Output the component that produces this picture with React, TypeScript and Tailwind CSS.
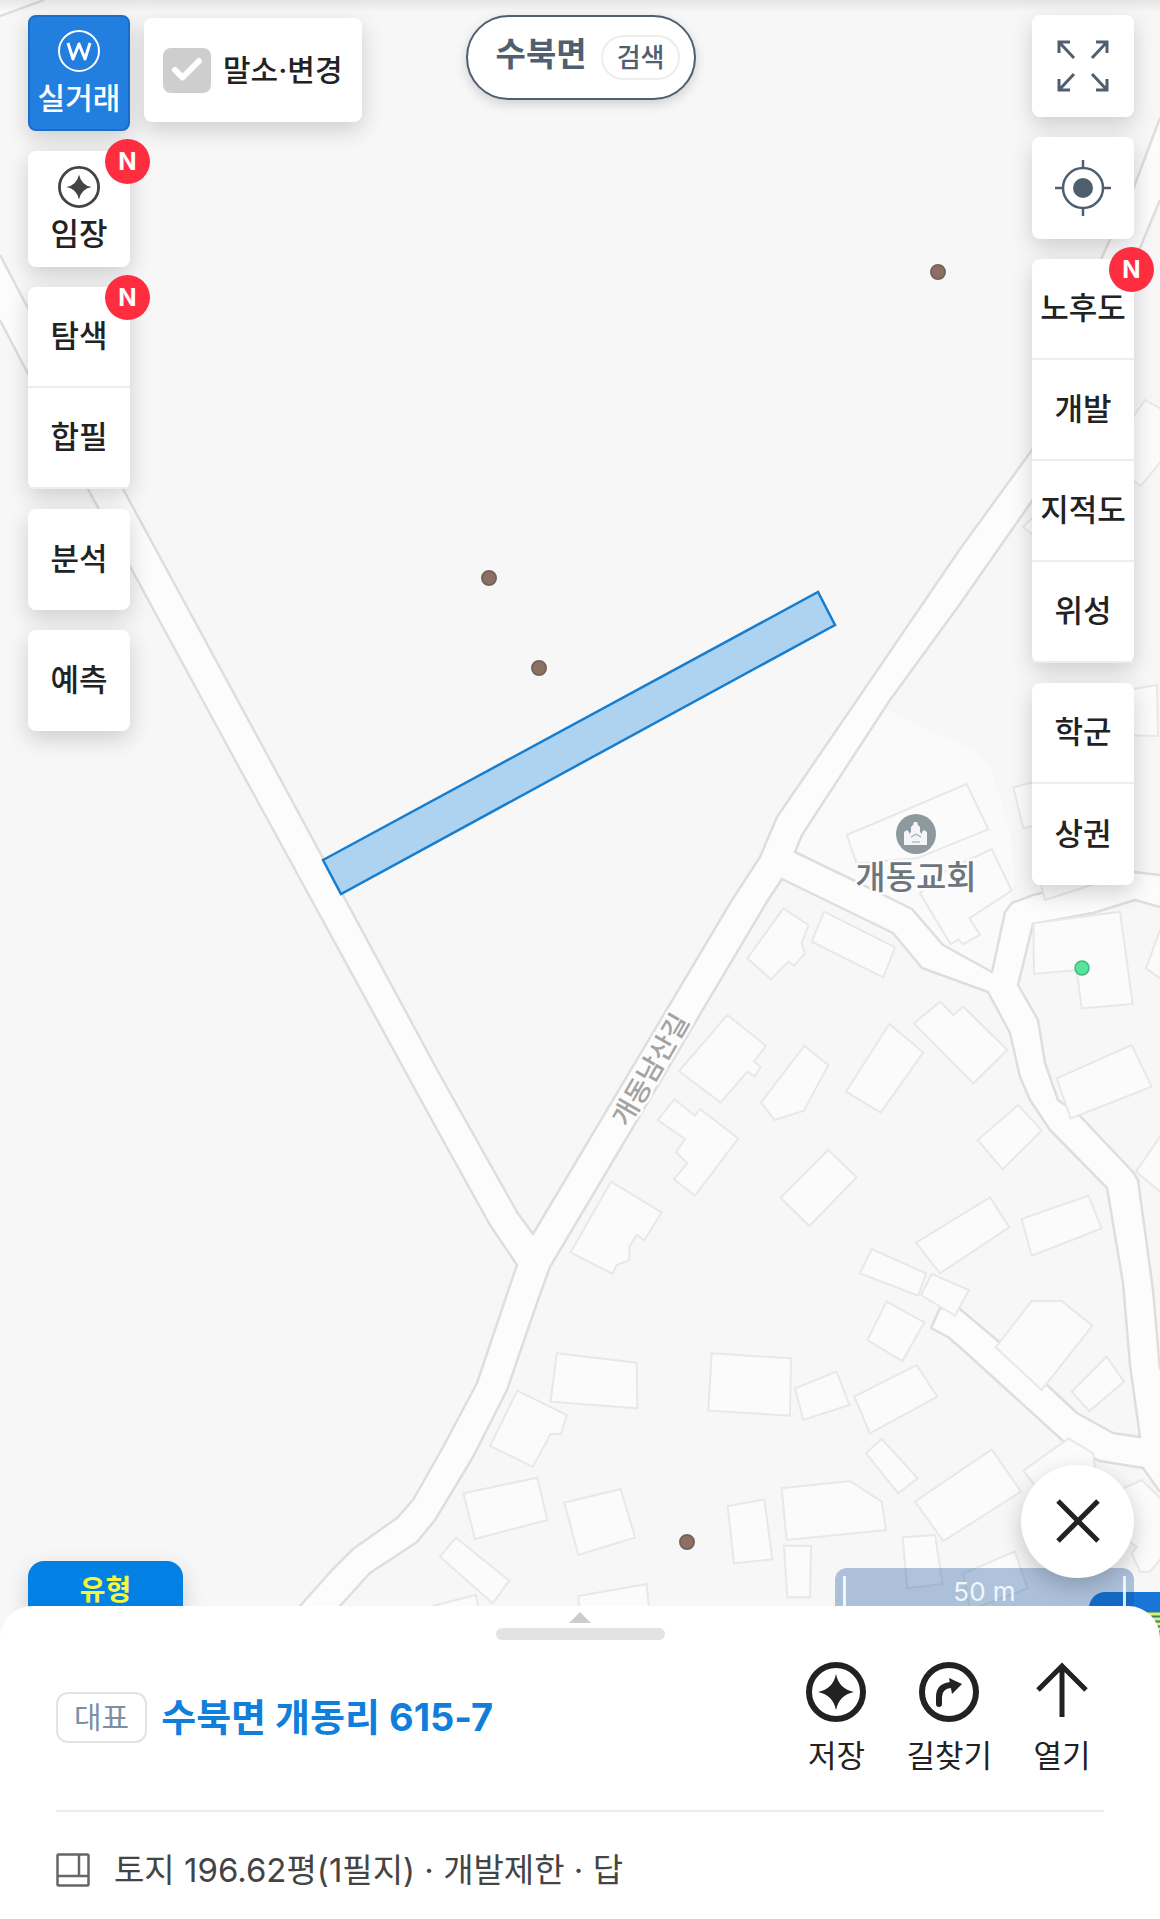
import type { ReactNode } from 'react'
import { Check } from 'lucide-react'

const roadFills = [
  '0,255 123,489 270,760 440,1075 517,1212 533,1234 550,1267 517,1265 490,1225 440,1135 235,760 88,489 0,320',
  '533,1234 732,900 760,857 777,817 857,700 960,549 1032,450 1102,257 1134,187 1160,118 1160,200 1140,248 1090,400 1032,501 960,604 890,700 802,835 795,852 782,879 768,900 550,1267 538,1300 507,1390 473,1457 435,1520 417,1542 370,1573 340,1606 310,1640 270,1640 300,1606 332,1570 353,1549 397,1518 413,1500 443,1447 477,1383 505,1300 517,1265',
  '795,852 853,880 912,909 943,945 992,972 1005,912 1012,903 1033,895 1134,872 1160,875 1160,907 1135,900 1093,913 1033,924 1018,985 1038,1020 1045,1063 1058,1100 1080,1116 1133,1172 1138,1180 1153,1290 1160,1370 1160,1492 1143,1468 1100,1461 1085,1455 1062,1440 963,1350 948,1337 931,1328 940,1308 960,1309 998,1341 1047,1385 1077,1413 1113,1433 1140,1437 1130,1365 1123,1283 1107,1188 1050,1130 1030,1100 1020,1077 1010,1033 988,992 922,968 893,933 782,879',
]

const roadEdges = [
  '0,16 44,0',
  '0,320 88,489 235,760 440,1135 490,1225 517,1265 505,1300 477,1383 443,1447 413,1500 397,1518 353,1549 332,1570 300,1606 270,1640',
  '0,255 123,489 270,760 440,1075 517,1212 533,1234 732,900 760,857 777,817 857,700 960,549 1032,450 1102,257 1134,187 1160,118',
  '1160,200 1140,248 1090,400 1032,501 960,604 890,700 802,835 795,852 853,880 912,909 943,945 992,972 1005,912 1012,903 1033,895 1134,872 1160,875',
  '310,1640 340,1606 370,1573 417,1542 435,1520 473,1457 507,1390 538,1300 550,1267 768,900 782,879 893,933 922,968 988,992 1010,1033 1020,1077 1030,1100 1050,1130 1107,1188 1123,1283 1130,1365 1140,1437 1113,1433 1077,1413 1047,1385 998,1341 960,1309 940,1308 931,1328 948,1337 963,1350 1062,1440 1085,1455 1100,1461 1143,1468 1160,1492',
  '1160,907 1135,900 1093,913 1033,924 1018,985 1038,1020 1045,1063 1058,1100 1080,1116 1133,1172 1138,1180 1153,1290 1160,1370',
]

// Building outlines, stored per tile at three units to the pixel
const tiles = [
  {
    x: 760,
    y: 700,
    shapes: [
      '260,405 620,252 685,388 470,475 290,490',
      '480,580 560,510 695,447 755,572 628,655 660,705 608,733 595,718 572,733',
      '192,635 405,742 370,832 155,725',
      '540,905 580,945 610,920 742,1050 640,1150 462,970',
      '388,972 490,1057 362,1238 258,1175',
      '820,670 1080,635 1118,912 965,925 950,810 822,822',
      '890,1135 1115,1035 1175,1160 932,1255',
      '760,262 900,225 930,350 790,385',
      '840,540 1000,500 1010,550 855,600',
      '1200,690 1158,805 1200,835 1260,860 1260,690',
      '1104,-828 1155,-900 1290,-825 1143,-642 1050,-705',
      '789,-519 822,-552 900,-510 855,-465',
      '1020,-15 1191,-45 1194,108 1050,105',
    ],
  },
  {
    x: 760,
    y: 1100,
    shapes: [
      '205,150 290,232 148,378 62,293',
      '775,15 845,92 728,208 653,120',
      '690,292 748,382 540,520 468,428',
      '785,357 985,287 1025,385 815,467',
      '335,447 498,520 475,587 300,520',
      '515,522 627,570 585,647 483,585',
      '380,605 493,667 427,783 322,720',
      '815,603 905,603 997,677 845,870 707,742',
      '1040,770 1092,845 988,933 935,875',
      '105,865 230,815 268,915 130,960',
      '283,890 470,795 532,890 330,1000',
      '365,1017 473,1135 415,1180 318,1060',
      '790,1112 925,1015 1000,1060 1010,1150 900,1250',
      '1200,110 1128,215 1200,275 1300,300 1300,110',
    ],
  },
  {
    x: 760,
    y: 1440,
    shapes: [
      '65,145 270,123 365,185 378,270 80,300',
      '72,317 153,317 150,472 82,472',
      '465,185 695,28 783,155 550,303',
      '428,292 525,285 548,432 442,445',
      '610,400 765,335 803,445 630,510',
      '1090,145 1145,120 1260,230 1200,360 1170,395 1140,395 1115,340 1130,320 1000,230',
    ],
  },
  {
    x: 300,
    y: 1300,
    shapes: [
      '770,160 1010,188 1012,325 752,305',
      '1235,160 1473,175 1470,347 1225,332',
      '652,272 800,345 783,402 752,402 698,500 570,438',
      '490,580 712,533 742,660 525,717',
      '793,608 962,567 1005,712 835,765',
      '468,713 628,842 578,910 420,770',
      '400,917 527,885 545,960 400,960',
      '835,888 1040,852 1050,960 840,960',
      '1283,618 1393,598 1417,778 1302,790',
    ],
  },
  {
    x: 440,
    y: 900,
    shapes: [
      '1030,25 1105,75 1085,130 1095,160 1062,197 1045,185 993,238 922,175',
      '862,345 978,437 942,485 962,500 945,530 922,515 842,608 717,513',
      '1093,438 1165,495 1092,632 1003,660 963,607',
      '703,598 765,647 780,627 895,715 765,887 702,838 742,790 708,757 735,717 653,660',
      '513,845 665,937 613,1020 590,1005 568,1040 568,1080 530,1095 518,1122 392,1057',
    ],
  },
]

const landDots = [
  [938, 272],
  [489, 578],
  [539, 668],
  [687, 1542],
]

function MapCanvas() {
  return (
    <svg
      viewBox="0 0 1160 1638"
      preserveAspectRatio="xMidYMin slice"
      className="absolute inset-0 h-full w-full"
      role="img"
      aria-label="지도"
    >
      <rect width="1160" height="1638" fill="#f7f7f7" />
      <polygon points="0,0 44,0 0,16" fill="#fbfbfb" />
      <polygon points="877,706 973,750 990,767 1010,830 1015,880 992,972 795,852" fill="#fafafa" />
      {roadFills.map((p) => (
        <polygon key={p} points={p} fill="#fcfcfc" />
      ))}
      {roadEdges.map((p) => (
        <polyline key={p} points={p} fill="none" stroke="#dedede" strokeWidth="2.5" strokeLinejoin="round" />
      ))}
      {tiles.map((t) => (
        <g key={`${t.x}-${t.y}`} transform={`translate(${t.x} ${t.y}) scale(${1 / 3})`}>
          {t.shapes.map((p) => (
            <polygon key={p} points={p} fill="#fbfbfb" stroke="#e8e8e8" strokeWidth="6" />
          ))}
        </g>
      ))}

      <polygon points="323,860 818,592 835,625 341,894" fill="#aed3f1" stroke="#177ecf" strokeWidth="2.5" />

      {landDots.map(([x, y]) => (
        <circle key={`${x}-${y}`} cx={x} cy={y} r="7" fill="#8d7064" stroke="#78635b" strokeWidth="2" />
      ))}
      <circle cx="1082" cy="968" r="7" fill="#57e39b" stroke="#45b67e" strokeWidth="1.5" />

      <circle cx="916" cy="834" r="20" fill="#8e999f" />
      <path
        d="M904 845V832l3-2 2 2v2l2-2v-5l2-2 1-3h3l1 3 2 2v5l2 2v-2l2-2 3 2v13z"
        fill="#f4f5f6"
      />
      <path d="M911 837l5-3 5 3M912 842h8" stroke="#b4bcc0" strokeWidth="1.5" fill="none" />
      <text
        x="916"
        y="889"
        textAnchor="middle"
        fontSize="33"
        fill="#6d767c"
        stroke="#fcfcfc"
        strokeWidth="5"
        paintOrder="stroke"
        className="font-medium"
      >
        개동교회
      </text>
      <text
        transform="translate(651 1070) rotate(-60)"
        y="9"
        textAnchor="middle"
        fontSize="27"
        fill="#a3a3a3"
        stroke="#fcfcfc"
        strokeWidth="5"
        paintOrder="stroke"
        className="font-medium"
      >
        개동남산길
      </text>
    </svg>
  )
}

function SparkCircle({ size, stroke }: { size: number; stroke: number }) {
  return (
    <svg width={size} height={size} viewBox="0 0 60 60" fill="none" aria-hidden="true">
      <circle cx="30" cy="30" r={30 - stroke / 2} stroke="currentColor" strokeWidth={stroke} />
      <path d="M30 12Q33 27 48 30Q33 33 30 48Q27 33 12 30Q27 27 30 12Z" fill="currentColor" />
    </svg>
  )
}

function WonCircle() {
  return (
    <svg width="42" height="42" viewBox="0 0 42 42" fill="none" stroke="currentColor" aria-hidden="true">
      <circle cx="21" cy="21" r="20" strokeWidth="2" />
      <path d="M10 13l5 16 6-15 6 15 5-16" strokeWidth="3" strokeLinejoin="round" />
    </svg>
  )
}

function ExpandArrows() {
  return (
    <svg width="52" height="52" viewBox="0 0 52 52" fill="none" stroke="currentColor" strokeWidth="3" aria-hidden="true">
      <path d="M2 13V2h11M2 2l15 16M39 2h11v11M50 2L35 18M2 39v11h11M2 50l15-16M39 50h11V39M50 50L35 34" />
    </svg>
  )
}

function Locate() {
  return (
    <svg width="58" height="58" viewBox="0 0 58 58" fill="none" stroke="currentColor" strokeWidth="2.5" aria-hidden="true">
      <circle cx="29" cy="29" r="20" />
      <circle cx="29" cy="29" r="10" fill="currentColor" stroke="none" />
      <path d="M29 1v8M29 49v8M1 29h8M49 29h8" />
    </svg>
  )
}

function RouteCircle() {
  return (
    <svg width="60" height="60" viewBox="0 0 60 60" fill="none" aria-hidden="true">
      <circle cx="30" cy="30" r="27" stroke="currentColor" strokeWidth="6" />
      <path d="M20 42V35Q20 24 32 23" stroke="currentColor" strokeWidth="6" strokeLinecap="round" />
      <path d="M30 16L43 22L33 32Z" fill="currentColor" />
    </svg>
  )
}

function ArrowUp() {
  return (
    <svg width="60" height="60" viewBox="0 0 60 60" fill="none" stroke="currentColor" strokeWidth="5" aria-hidden="true">
      <path d="M30 55V4M6 28L30 4l24 24" />
    </svg>
  )
}

function NewBadge() {
  return (
    <span className="absolute -top-3 -right-5 flex size-[45px] items-center justify-center rounded-full bg-[#ff2d40] text-2xl font-bold text-white">
      N
    </span>
  )
}

function ToolGroup({ items, isNew }: { items: string[]; isNew?: boolean }) {
  return (
    <div className="relative flex w-[102px] flex-col divide-y-2 divide-[#ededed] rounded-lg bg-white shadow-[0_8px_22px_rgba(0,0,0,0.17)]">
      {items.map((item) => (
        <button key={item} type="button" className="h-[101px] text-[31px] font-medium whitespace-nowrap text-[#222]">
          {item}
        </button>
      ))}
      {isNew && <NewBadge />}
    </div>
  )
}

function IconTool({ label, children }: { label: string; children: ReactNode }) {
  return (
    <button
      type="button"
      aria-label={label}
      className="flex size-[102px] items-center justify-center rounded-lg bg-white text-[#4f5f70] shadow-[0_8px_22px_rgba(0,0,0,0.17)]"
    >
      {children}
    </button>
  )
}

function SheetAction({ label, children }: { label: string; children: ReactNode }) {
  return (
    <button type="button" className="flex flex-col items-center gap-4 text-[31px] leading-9 whitespace-nowrap text-[#222]">
      {children}
      {label}
    </button>
  )
}

export default function App() {
  return (
    <div className="flex min-h-screen flex-col overflow-hidden bg-white font-['Inter','Noto_Sans_CJK_KR',sans-serif]">
      <main className="relative flex flex-1 flex-col justify-between overflow-hidden">
        <MapCanvas />
        <div className="absolute inset-x-0 top-0 h-3 bg-linear-to-b from-black/8 to-transparent" />

        <div className="relative grid grid-cols-[1fr_auto_1fr] items-start px-7 pt-[15px] pr-[26px]">
          <div className="flex items-start gap-3.5">
            <div className="flex flex-col gap-5">
              <button
                type="button"
                className="flex h-[116px] w-[102px] flex-col items-center gap-1.5 rounded-lg border-2 border-[#1b6fc9] bg-[#227fe0] pt-[13px] text-[30px] leading-10 font-medium whitespace-nowrap text-white shadow-[0_8px_22px_rgba(0,0,0,0.17)]"
              >
                <WonCircle />
                실거래
              </button>
              <div className="relative">
                <button
                  type="button"
                  className="flex h-[116px] w-[102px] flex-col items-center gap-1.5 rounded-lg bg-white pt-[15px] text-[31px] leading-10 font-medium text-[#222] shadow-[0_8px_22px_rgba(0,0,0,0.17)]"
                >
                  <span className="h-[42px] text-[#444]">
                    <SparkCircle size={42} stroke={4} />
                  </span>
                  임장
                </button>
                <NewBadge />
              </div>
              <ToolGroup items={['탐색', '합필']} isNew />
              <ToolGroup items={['분석']} />
              <ToolGroup items={['예측']} />
            </div>

            <label className="mt-[3px] flex h-[104px] items-center gap-3 rounded-lg bg-white px-[19px] text-[30px] font-medium whitespace-nowrap text-[#222] shadow-[0_8px_22px_rgba(0,0,0,0.17)]">
              <span className="relative flex h-[45px] w-12 items-center justify-center">
                <input type="checkbox" className="absolute inset-0 appearance-none rounded-lg bg-[#cecece]" />
                <Check size={36} strokeWidth={4} className="relative text-white" aria-hidden="true" />
              </span>
              말소·변경
            </label>
          </div>

          <button
            type="button"
            className="flex h-[85px] items-center gap-3.5 rounded-full border-2 border-[#4f5f70] bg-white pr-3.5 pl-7 whitespace-nowrap text-[#4f5f70] shadow-[0_4px_12px_rgba(0,0,0,0.16)]"
          >
            <span className="pb-1.5 text-[33px] font-bold">수북면</span>
            <span className="flex h-[45px] items-center rounded-full border-2 border-[#ededed] px-3.5 text-[26px] font-medium">
              검색
            </span>
          </button>

          <div className="flex flex-col items-end gap-5">
            <IconTool label="전체화면">
              <ExpandArrows />
            </IconTool>
            <IconTool label="현재 위치">
              <Locate />
            </IconTool>
            <ToolGroup items={['노후도', '개발', '지적도', '위성']} isNew />
            <ToolGroup items={['학군', '상권']} />
          </div>
        </div>

        <div className="relative flex items-end justify-between pr-[26px] pl-7">
          <button
            type="button"
            className="flex h-[77px] w-[155px] items-start justify-center rounded-t-2xl bg-[#0380e3] pt-2 text-[28px] font-bold text-[#f4f73c] shadow-[0_8px_22px_rgba(0,0,0,0.17)]"
          >
            유형
          </button>

          <div className="absolute -right-8 bottom-0 h-[46px] w-[103px] rounded-tl-2xl bg-[#1976d8]">
            <svg width="103" height="46" viewBox="0 0 103 46" aria-hidden="true">
              <path d="M56 20h20v24H56z" fill="#3d7d74" />
              <path d="M56 22h20M56 27h20M56 32h20M56 37h20" stroke="#dcf07a" strokeWidth="3" />
            </svg>
          </div>

          <div className="relative h-[70px] w-[299px] rounded-t-xl bg-[#0f4e9f]/32 px-2 pt-2">
            <div className="flex h-full justify-center border-x-3 border-white/85 text-[26px] leading-8 text-white/85">
              50 m
            </div>
            <button
              type="button"
              aria-label="닫기"
              className="absolute right-0 bottom-[60px] flex size-[113px] items-center justify-center rounded-full bg-white text-[#222] shadow-[0_8px_22px_rgba(0,0,0,0.2)]"
            >
              <svg width="44" height="44" viewBox="0 0 44 44" stroke="currentColor" strokeWidth="5" aria-hidden="true">
                <path d="M2 2l40 40M42 2L2 42" />
              </svg>
            </button>
          </div>
        </div>
      </main>

      <section className="relative -mt-8 rounded-t-[32px] bg-white px-14 pb-6">
        <div className="flex flex-col items-center gap-[5px] pt-1.5">
          <svg width="22" height="11" viewBox="0 0 22 11" fill="#ccc" aria-hidden="true">
            <path d="M11 0l11 11H0z" />
          </svg>
          <div className="h-3 w-[169px] rounded-full bg-[#e3e3e3]" />
        </div>

        <div className="flex items-center justify-between border-b-2 border-[#ececec] pt-[22px] pr-3 pb-9">
          <div className="flex items-center gap-3.5">
            <span className="flex h-[51px] items-center rounded-xl border-2 border-[#e3e3e3] px-4 text-[30px] text-[#7b8fa8]">
              대표
            </span>
            <h1 className="text-[38px] font-bold text-[#0f7fdb]">수북면 개동리 615-7</h1>
          </div>
          <div className="flex gap-10">
            <SheetAction label="저장">
              <SparkCircle size={60} stroke={6} />
            </SheetAction>
            <SheetAction label="길찾기">
              <RouteCircle />
            </SheetAction>
            <SheetAction label="열기">
              <ArrowUp />
            </SheetAction>
          </div>
        </div>

        <div className="flex items-center gap-6 pt-[34px]">
          <svg width="34" height="34" viewBox="0 0 34 34" fill="none" stroke="#666" strokeWidth="2.5" aria-hidden="true">
            <rect x="1.5" y="1.5" width="31" height="31" rx="1" />
            <path d="M2 23h30M23 2v21" />
          </svg>
          <p className="text-[33px] text-[#444]">토지 196.62평(1필지) · 개발제한 · 답</p>
        </div>
      </section>
    </div>
  )
}
